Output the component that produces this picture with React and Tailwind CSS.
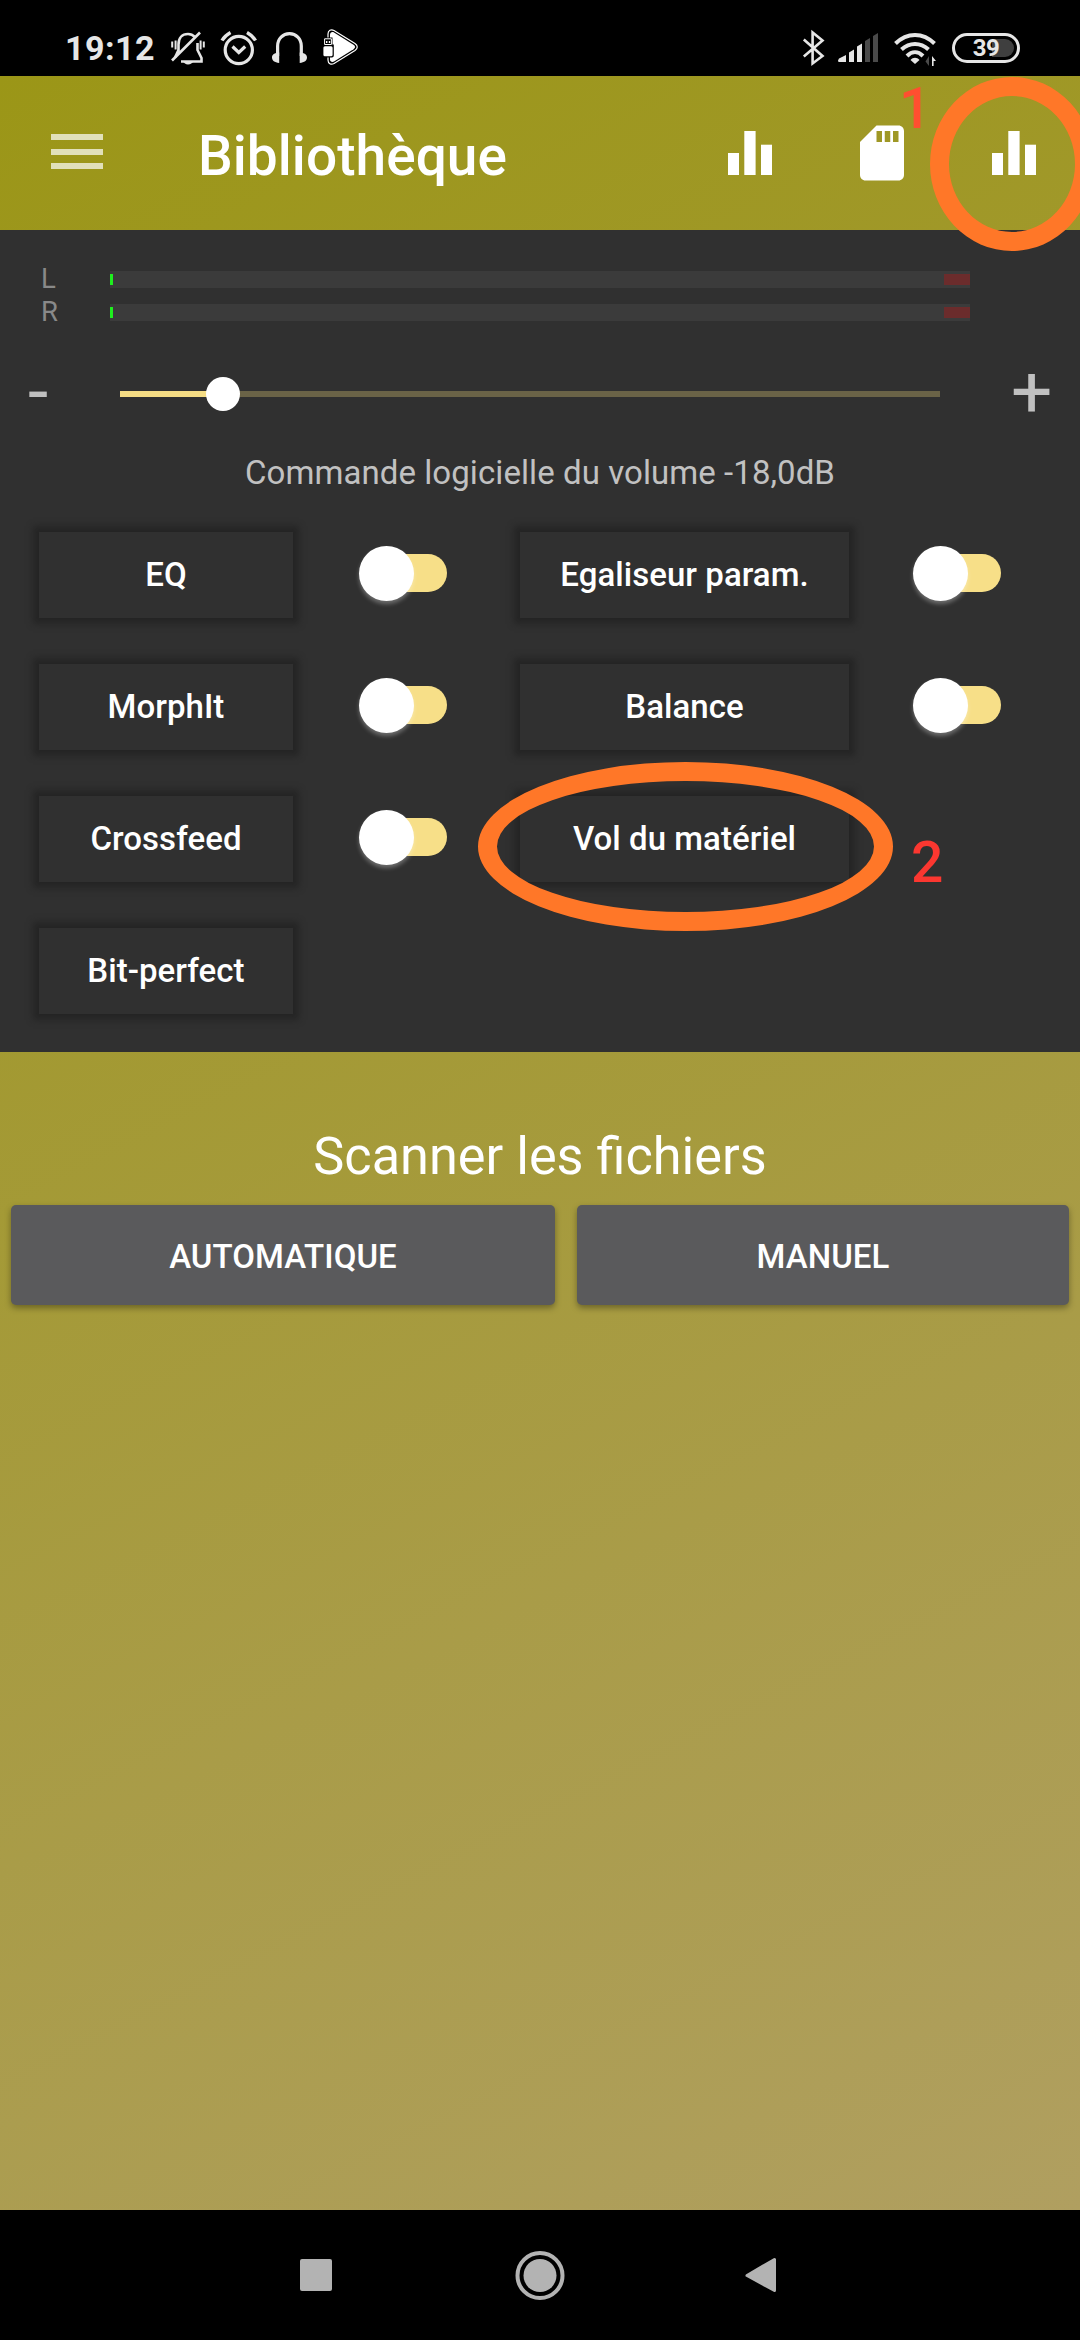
import { useState } from "react";

const ROWS = [
  [{ id: "eq", label: "EQ", toggle: true }, { id: "peq", label: "Egaliseur param.", toggle: true }],
  [{ id: "morphit", label: "MorphIt", toggle: true }, { id: "balance", label: "Balance", toggle: true }],
  [{ id: "crossfeed", label: "Crossfeed", toggle: true }, { id: "hwvol", label: "Vol du matériel", toggle: false }],
  [{ id: "bitperfect", label: "Bit-perfect", toggle: false }],
];

function StatusBar() {
  return (
    <div className="flex h-[76px] items-start justify-between bg-black pl-[65px] pr-[60px] text-[#e6e6e6]">
      <div className="flex items-start">
        <span className="mt-[28px] w-[92px] text-[34px] leading-[40px] font-bold tracking-[0.5px]">19:12</span>

        {/* Silencieux */}
        <svg viewBox="168 28 40 40" className="mt-[28px] ml-[11px] h-10 w-10" fill="none" stroke="currentColor" strokeWidth="2.6">
          <path d="M178.5 54V44.5C178.5 38 182 34 188 34C191 34 193 35 195 37M197.5 43V50L201.5 58V61.5H181" />
          <path d="M178.5 50L175 57.5" />
          <path d="M200 32.5L172 60.5" />
          <path d="M172.2 41.5V47.5M175.6 40.5V49.5M203.8 41.5V47.5M200.6 40.5V49.5" strokeWidth="2" />
          <path d="M183 61.5H193.5C192.5 63 190.5 64.5 188 64.5C185.5 64.5 184 63 183 61.5Z" fill="currentColor" stroke="none" />
        </svg>

        {/* Alarme */}
        <svg viewBox="218 28 42 40" className="mt-[28px] ml-[10px] h-10 w-[42px]" fill="none" stroke="currentColor" strokeWidth="3.2">
          <circle cx="238.8" cy="50" r="13.6" />
          <path d="M232.5 46.5L238.8 52.5L245.2 46.5" />
          <path d="M222 40.5C224 37 227 34.5 230.5 32.5M255.5 40.5C253.5 37 250.5 34.5 247 32.5" strokeWidth="3.4" />
        </svg>

        {/* Casque */}
        <svg viewBox="270 28 40 40" className="mt-[28px] ml-[10px] h-10 w-10">
          <path d="M277.6 56V46C277.6 38.5 283 33.7 289.5 33.7C296 33.7 301.3 38.5 301.3 46V56" fill="none" stroke="currentColor" strokeWidth="3.2" />
          <path d="M279.2 52.5V63C274.5 62.5 272 60.5 272 57.5C272 54.5 274.5 52.8 279.2 52.5ZM299.7 52.5V63C304.5 62.5 307 60.5 307 57.5C307 54.5 304.5 52.8 299.7 52.5Z" fill="currentColor" />
        </svg>

        {/* USB Audio Player */}
        <svg viewBox="320 27 40 40" className="mt-[27px] ml-[10px] h-10 w-10">
          <path d="M328 34C328 30.5 331 28.8 334 30.5L355 43.5C358 45.5 358 48.5 355 50.5L334 63.5C331 65.2 328 63.5 328 60Z" fill="#000" stroke="#fff" strokeWidth="1.2" />
          <path d="M330 35C330 32.5 332 31.5 334 32.5L353.5 44.8C355.6 46.2 355.6 47.8 353.5 49.2L334 61.5C332 62.5 330 61.5 330 59Z" fill="#fff" />
          <path d="M323.5 37.5H332.5V44.5H333.8V55.5C333.8 56.5 333 57.5 332 57.5H324C323 57.5 322.2 56.5 322.2 55.5V44.5H323.5Z" fill="#000" />
          <path d="M324.6 38.8H331.4V44.5H324.6Z" fill="none" stroke="#fff" strokeWidth="1" />
          <path d="M326 41H327.4V43H326ZM328.8 41H330.2V43H328.8Z" fill="#fff" />
          <rect x="323.4" y="46.2" width="9.2" height="10" rx="1.5" fill="#fff" />
        </svg>
      </div>

      <div className="flex items-start">
        <svg viewBox="801 28 26 40" className="mt-[28px] h-10 w-[26px]" fill="none" stroke="currentColor" strokeWidth="2.6">
          <path d="M803.8 39.5L822.5 56L812.6 63.5V32.5L822.5 40.5L803.8 56.5" />
        </svg>

        <svg viewBox="836 28 44 40" className="mt-[28px] ml-[9px] h-10 w-11" fill="currentColor">
          <path d="M838 60.5L839 58.5L846 55V62H838.5ZM849 52.5L854 49.5V62H849ZM857 46.5L862 43.5V62H857Z" />
          <path d="M865 41L870 38V62H865ZM873 36L878 33V62H873Z" fill="#4a4a4a" />
        </svg>

        <svg viewBox="892 28 46 40" className="mt-[28px] ml-[12px] h-10 w-[46px]" fill="none" stroke="currentColor" strokeWidth="4">
          <path d="M895.5 43.5C907 32 923 32 934.5 43.5" />
          <path d="M901.5 49.5C909.5 42 920.5 42 928.5 49.5" />
          <path d="M907 56C912 51 918 51 923 56" />
          <path d="M910.5 60C913 57 917 57 919.5 60L915 64Z" fill="currentColor" stroke="none" />
          <path d="M929 56V66L925.5 61.5Z" fill="#4a4a4a" stroke="none" />
          <path d="M932 66V56L936 61H933.6V66Z" fill="currentColor" stroke="none" />
        </svg>

        <div className="mt-[33px] ml-[14px] flex h-[30px] w-[68px] rounded-full border-[3px] border-[#e6e6e6] p-[3px]">
          <div className="flex w-full items-center justify-center rounded-full bg-linear-to-r from-black from-60% to-[#3f3f3f] to-60%">
            <span className="text-[24px] leading-6 font-bold tracking-[-0.5px]">39</span>
          </div>
        </div>
      </div>
    </div>
  );
}

function BarsIcon() {
  return (
    <svg viewBox="0 0 44 44" className="h-11 w-11" fill="#fff">
      <rect x="0" y="22" width="11" height="22" />
      <rect x="16.3" y="0" width="11.3" height="44" />
      <rect x="33" y="13.7" width="11" height="30.3" />
    </svg>
  );
}

function Header() {
  return (
    <header className="flex h-[154px] items-start pl-[51px] text-white">
      <button type="button" className="mt-[58px] flex w-[52px] flex-col gap-[8.5px]">
        <span className="h-[6px] w-full bg-white/70" />
        <span className="h-[6px] w-full bg-white/70" />
        <span className="h-[6px] w-full bg-white/70" />
      </button>
      <h1 className="mt-[50px] ml-[95px] w-[530px] text-[55px] leading-[60px] font-medium tracking-[0.05px]">
        Bibliothèque
      </h1>
      <button type="button" className="mt-[55px]">
        <BarsIcon />
      </button>
      <button type="button" className="mt-[44px] ml-[77px]">
        <svg viewBox="0 0 24 24" className="h-[66px] w-[66px]" fill="#fff">
          <path d="M18 2h-8L4 8v12c0 1.1.9 2 2 2h12c1.1 0 2-.9 2-2V4c0-1.1-.9-2-2-2zm-6 6h-2V4h2v4zm3 0h-2V4h2v4zm3 0h-2V4h2v4z" />
        </svg>
      </button>
      <button type="button" className="mt-[55px] ml-[77px]">
        <BarsIcon />
      </button>
    </header>
  );
}

function Meter({ channel }) {
  return (
    <div className="flex h-[33px] items-center pl-[41px]">
      <span className="w-[69px] pb-[2px] text-[27.5px] leading-[30px] text-[#898989]">{channel}</span>
      <div className="flex h-[17px] w-[860px] items-center justify-between bg-[#3b3b3b]">
        <span className="h-[11px] w-[3px] bg-[#1eee1e]" />
        <span className="h-[11px] w-[26px] bg-[#6b2c2c]" />
      </div>
    </div>
  );
}

function Toggle({ checked, onChange }) {
  return (
    <button
      type="button"
      role="switch"
      aria-checked={checked}
      onClick={onChange}
      className="mb-[4px] flex w-[88px] items-center"
    >
      <span className="z-10 h-[55px] w-[55px] shrink-0 rounded-full bg-white shadow-[0_3px_4px_rgba(255,255,255,0.3)]" />
      <span className="-ml-[33px] h-[38px] w-[66px] shrink-0 rounded-full bg-[#f7df88]" />
    </button>
  );
}

function EffectButton({ label, width }) {
  return (
    <button
      type="button"
      className={`${width} h-[86px] bg-[#303030] text-[33px] leading-[40px] font-medium tracking-[0.05px] text-white shadow-[0_0_6px_6px_#252525]`}
    >
      {label}
    </button>
  );
}

export default function App() {
  const [enabled, setEnabled] = useState({});
  const volume = 12.5; // position du curseur en %

  const toggle = (id) => setEnabled({ ...enabled, [id]: !enabled[id] });

  return (
    <div className="relative flex h-[2340px] w-[1080px] flex-col overflow-hidden bg-black font-['Roboto',sans-serif]">
      <StatusBar />

      <main className="flex flex-1 flex-col bg-[linear-gradient(153.2deg,#9b9617,#b09f60)]">
        <Header />

        <section className="h-[822px] bg-[#303030] pt-[33px]">
          <Meter channel="L" />
          <Meter channel="R" />

          {/* Volume */}
          <div className="mt-[25px] flex h-[80px] items-center text-[#c0c0c0]">
            <span className="mb-[6px] w-[120px] pl-[28px] text-[73px] leading-[74px]">-</span>
            <div className="relative flex h-[34px] w-[820px] items-center">
              <div className="h-[6px] w-full bg-[#6a6347]">
                <div className="h-full bg-[#f5dd85]" style={{ width: `${volume}%` }} />
              </div>
              <span
                className="absolute top-0 h-[34px] w-[34px] -translate-x-1/2 rounded-full bg-white"
                style={{ left: `${volume}%` }}
              />
            </div>
            <span className="mb-[6px] pl-[71px] text-[73px] leading-[74px]">+</span>
          </div>

          <p className="mt-[19px] text-center text-[33px] leading-[40px] tracking-[0.07px] text-[#c1c1c1]">
            Commande logicielle du volume -18,0dB
          </p>

          <div className="mt-[39px] flex flex-col gap-[46px] pl-[39px]">
            {ROWS.map(([left, right]) => (
              <div key={left.id} className="grid h-[86px] grid-cols-[320px_161px_393px_88px] items-center">
                <EffectButton label={left.label} width="w-[254px]" />
                {left.toggle ? <Toggle checked={!!enabled[left.id]} onChange={() => toggle(left.id)} /> : <span />}
                {right && <EffectButton label={right.label} width="w-[329px]" />}
                {right?.toggle && <Toggle checked={!!enabled[right.id]} onChange={() => toggle(right.id)} />}
              </div>
            ))}
          </div>
        </section>

        <section className="pt-[75px] text-white">
          <h2 className="text-center text-[52.25px] leading-[60px]">Scanner les fichiers</h2>
          <div className="mt-[18px] flex gap-[22px] px-[11px] text-[33px] leading-[40px] font-medium tracking-[0.05px]">
            <button type="button" className="h-[100px] w-[544px] rounded-[5px] bg-[#5a5a5c] pt-[3px] shadow-[0_3px_6px_rgba(0,0,0,0.35)]">
              AUTOMATIQUE
            </button>
            <button type="button" className="h-[100px] w-[492px] rounded-[5px] bg-[#5a5a5c] pt-[3px] shadow-[0_3px_6px_rgba(0,0,0,0.35)]">
              MANUEL
            </button>
          </div>
        </section>
      </main>

      <nav className="flex h-[130px] items-start bg-black pl-[300px] text-[#b3b3b3]">
        <span className="mt-[49px] h-8 w-8 rounded-[2px] bg-[#b3b3b3]" />
        <svg viewBox="0 0 50 50" className="mt-[40px] ml-[183px] h-[50px] w-[50px]">
          <circle cx="25" cy="25.5" r="22.5" fill="none" stroke="currentColor" strokeWidth="4" />
          <circle cx="25" cy="25.5" r="16.5" fill="currentColor" />
        </svg>
        <svg viewBox="0 0 32 38" className="mt-[46px] ml-[180px] h-[38px] w-8">
          <path d="M29.5 3.5V34.5L2 19.5Z" fill="currentColor" stroke="currentColor" strokeWidth="3" strokeLinejoin="round" />
        </svg>
      </nav>

      {/* Annotations */}
      <div className="absolute top-[77px] left-[930px] h-[174px] w-[164px] rounded-[50%] border-[19px] border-[#ff7728]" />
      <span className="absolute top-[79px] left-[899px] text-[57px] leading-[60px] font-medium text-[#ff4f30]">1</span>
      <div className="absolute top-[762px] left-[478px] h-[169px] w-[415px] rounded-[50%] border-[19px] border-[#ff7728]" />
      <span className="absolute top-[833px] left-[911px] text-[57px] leading-[60px] font-medium text-[#fb3730]">2</span>
    </div>
  );
}
